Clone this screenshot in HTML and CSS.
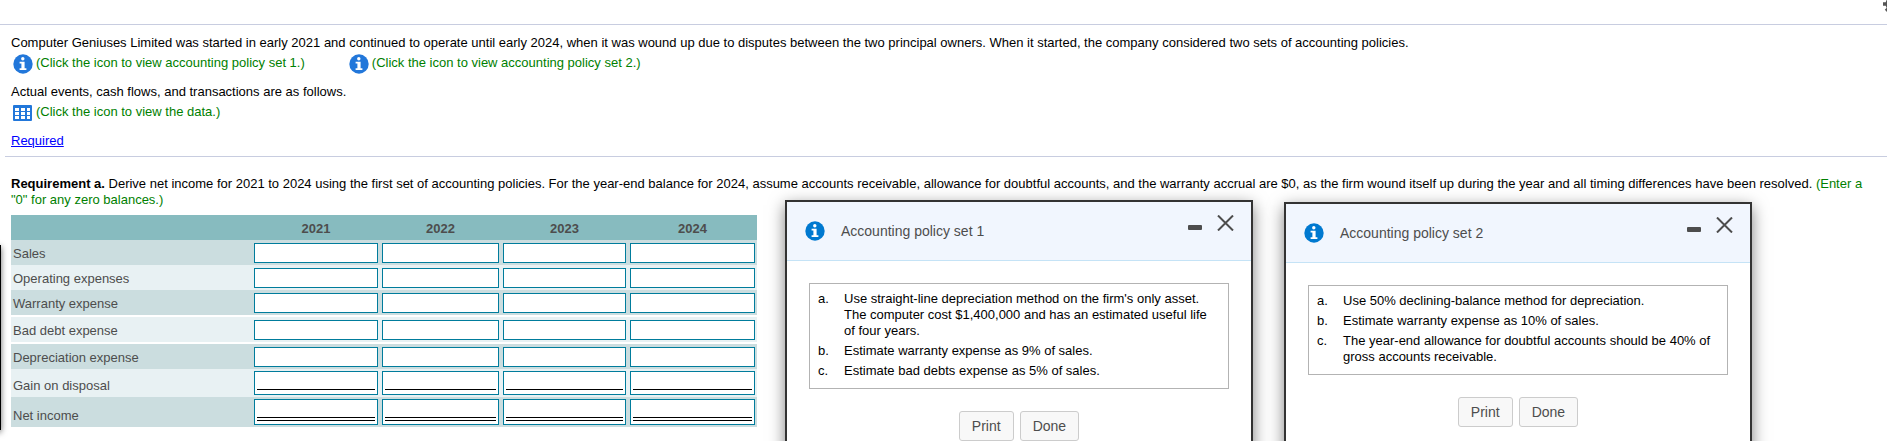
FILE: index.html
```html
<!DOCTYPE html>
<html lang="en">
<head>
<meta charset="utf-8">
<title>Accounting policy exercise</title>
<link rel="stylesheet" href="styles.css">
</head>
<body>
<svg class="defs" aria-hidden="true">
  <symbol id="info" viewBox="0 0 20 20">
    <circle cx="10" cy="10" r="9.7" fill="currentColor"/>
    <circle cx="9.8" cy="4.7" r="1.7" fill="#fff"/>
    <path d="M6.6 7.8h5v6.4h1.8v1.8H6.6v-1.8h1.8V9.6H6.6z" fill="#fff"/>
  </symbol>
</svg>
<div class="page">
  <header class="topbar">
    <button class="gear" aria-label="Settings"><svg viewBox="0 0 20 20"><circle cx="10" cy="10" r="5.5" fill="none" stroke="currentColor" stroke-width="4"/><path d="M10 0v20M0 10h20M3 3l14 14M17 3L3 17" stroke="currentColor" stroke-width="3.4"/><circle cx="10" cy="10" r="3.5" fill="#fff"/></svg></button>
  </header>
  <section class="problem">
    <p class="line">Computer Geniuses Limited was started in early 2021 and continued to operate until early 2024, when it was wound up due to disputes between the two principal owners. When it started, the company considered two sets of accounting policies.</p>
    <div class="links">
      <a class="pop" href="#set1"><svg><use href="#info"/></svg><span>(Click the icon to view accounting policy set 1.)</span></a>
      <a class="pop" href="#set2"><svg><use href="#info"/></svg><span>(Click the icon to view accounting policy set 2.)</span></a>
    </div>
    <p class="line">Actual events, cash flows, and transactions are as follows.</p>
    <div class="links">
      <a class="pop" href="#data"><svg viewBox="0 0 20 20"><rect y="2" width="19" height="16" rx="1" fill="currentColor"/><path d="M2 5h4v3H2zM8 5h4v3H8zM14 5h3v3h-3zM2 9h4v3H2zM8 9h4v3H8zM14 9h3v3h-3zM2 13h4v3H2zM8 13h4v3H8zM14 13h3v3h-3z" fill="#fff"/></svg><span>(Click the icon to view the data.)</span></a>
    </div>
    <p class="line"><a href="#required">Required</a></p>
  </section>
  <section class="requirement">
    <p class="line"><b>Requirement a.</b> Derive net income for 2021 to 2024 using the first set of accounting policies. For the year-end balance for 2024, assume accounts receivable, allowance for doubtful accounts, and the warranty accrual are $0, as the firm wound itself up during the year and all timing differences have been resolved. <span class="hint">(Enter a "0" for any zero balances.)</span></p>
    <table class="sheet">
      <colgroup><col class="c0"><col class="c1"><col class="c2"><col class="c3"><col class="c4"></colgroup>
      <thead><tr><td></td><th scope="col">2021</th><th scope="col">2022</th><th scope="col">2023</th><th scope="col">2024</th></tr></thead>
      <tbody>
        <tr><th scope="row">Sales</th><td><div class="box"><input aria-label="Sales 2021"></div></td><td><div class="box"><input aria-label="Sales 2022"></div></td><td><div class="box"><input aria-label="Sales 2023"></div></td><td><div class="box"><input aria-label="Sales 2024"></div></td></tr>
        <tr><th scope="row">Operating expenses</th><td><div class="box"><input aria-label="Operating expenses 2021"></div></td><td><div class="box"><input aria-label="Operating expenses 2022"></div></td><td><div class="box"><input aria-label="Operating expenses 2023"></div></td><td><div class="box"><input aria-label="Operating expenses 2024"></div></td></tr>
        <tr class="gap"><th scope="row">Warranty expense</th><td><div class="box"><input aria-label="Warranty expense 2021"></div></td><td><div class="box"><input aria-label="Warranty expense 2022"></div></td><td><div class="box"><input aria-label="Warranty expense 2023"></div></td><td><div class="box"><input aria-label="Warranty expense 2024"></div></td></tr>
        <tr class="gap"><th scope="row">Bad debt expense</th><td><div class="box"><input aria-label="Bad debt expense 2021"></div></td><td><div class="box"><input aria-label="Bad debt expense 2022"></div></td><td><div class="box"><input aria-label="Bad debt expense 2023"></div></td><td><div class="box"><input aria-label="Bad debt expense 2024"></div></td></tr>
        <tr><th scope="row">Depreciation expense</th><td><div class="box"><input aria-label="Depreciation expense 2021"></div></td><td><div class="box"><input aria-label="Depreciation expense 2022"></div></td><td><div class="box"><input aria-label="Depreciation expense 2023"></div></td><td><div class="box"><input aria-label="Depreciation expense 2024"></div></td></tr>
        <tr class="subtotal"><th scope="row">Gain on disposal</th><td><div class="box"><input aria-label="Gain on disposal 2021"></div></td><td><div class="box"><input aria-label="Gain on disposal 2022"></div></td><td><div class="box"><input aria-label="Gain on disposal 2023"></div></td><td><div class="box"><input aria-label="Gain on disposal 2024"></div></td></tr>
        <tr class="subtotal total"><th scope="row">Net income</th><td><div class="box"><input aria-label="Net income 2021"><i></i></div></td><td><div class="box"><input aria-label="Net income 2022"><i></i></div></td><td><div class="box"><input aria-label="Net income 2023"><i></i></div></td><td><div class="box"><input aria-label="Net income 2024"><i></i></div></td></tr>
      </tbody>
    </table>
  </section>

  <div class="edge"></div>

  <div class="dialog first" id="set1" role="dialog" aria-labelledby="t1">
    <div class="head">
      <svg class="badge"><use href="#info"/></svg>
      <h2 id="t1">Accounting policy set 1</h2>
      <button class="min" aria-label="Minimize"><svg viewBox="0 0 14 5"><rect width="14" height="5" rx="1" fill="currentColor"/></svg></button>
      <button class="close" aria-label="Close"><svg viewBox="0 0 17 16"><path d="M1 0.5l15 15M16 0.5l-15 15" stroke="currentColor" stroke-width="2"/></svg></button>
    </div>
    <ol class="policy">
      <li>Use straight-line depreciation method on the firm's only asset. The computer cost $1,400,000 and has an estimated useful life of four years.</li>
      <li>Estimate warranty expense as 9% of sales.</li>
      <li>Estimate bad debts expense as 5% of sales.</li>
    </ol>
    <div class="actions"><button>Print</button><button>Done</button></div>
  </div>

  <div class="dialog second" id="set2" role="dialog" aria-labelledby="t2">
    <div class="head">
      <svg class="badge"><use href="#info"/></svg>
      <h2 id="t2">Accounting policy set 2</h2>
      <button class="min" aria-label="Minimize"><svg viewBox="0 0 14 5"><rect width="14" height="5" rx="1" fill="currentColor"/></svg></button>
      <button class="close" aria-label="Close"><svg viewBox="0 0 17 16"><path d="M1 0.5l15 15M16 0.5l-15 15" stroke="currentColor" stroke-width="2"/></svg></button>
    </div>
    <ol class="policy">
      <li>Use 50% declining-balance method for depreciation.</li>
      <li>Estimate warranty expense as 10% of sales.</li>
      <li>The year-end allowance for doubtful accounts should be 40% of gross accounts receivable.</li>
    </ol>
    <div class="actions"><button>Print</button><button>Done</button></div>
  </div>
</div>
</body>
</html>
```
FILE: styles.css
```css
* { box-sizing: border-box; }
body {
  margin: 0;
  background: #fff;
  color: #000;
  font: 13px/16px "Liberation Sans", Arial, sans-serif;
}
.defs { position: absolute; width: 0; height: 0; }
.page { position: relative; min-height: 100vh; overflow: hidden; }

.topbar {
  display: flex;
  justify-content: flex-end;
  height: 25px;
  border-bottom: 1px solid #c8cde0;
}
.gear {
  width: 20px;
  height: 20px;
  margin: -6px -16px 0 0;
  padding: 0;
  border: 0;
  background: none;
  color: #555;
}
.gear svg { display: block; width: 20px; height: 20px; }

.line { margin: 0; }
.problem {
  margin-left: 5px;
  padding: 10px 6px 7px;
  border-bottom: 1px solid #c8cde0;
}
.problem a { color: #00f; }
.links { display: flex; gap: 42px; height: 33px; padding-top: 3px; }
.problem .pop {
  display: flex;
  gap: 3px;
  height: 20px;
  padding-left: 2px;
  color: #008000;
  line-height: 18px;
  text-decoration: none;
}
.pop svg { width: 20px; height: 20px; color: #2277da; }

.requirement { padding: 19px 22px 0 11px; }
.hint { color: #008000; }

.sheet {
  width: 746px;
  margin-top: 7px;
  border-spacing: 0;
  table-layout: fixed;
  color: #4d4d4d;
}
.c0 { width: 241px; }
.c1 { width: 128px; }
.c2 { width: 121px; }
.c3 { width: 127px; }
.c4 { width: 129px; }
.sheet td, .sheet th { height: 25px; padding: 0 2px; vertical-align: bottom; }
.sheet th { padding-bottom: 3px; }
.sheet td { padding-bottom: 2px; }
.sheet thead { background: #87bbbf; }
.sheet tbody th { font-weight: normal; text-align: left; }
.sheet tbody tr:nth-child(odd) { background: #cbdddf; }
.sheet tbody tr:nth-child(even) { background: #e8f1f3; }
.sheet .gap > * { height: 27px; border-bottom: 2px solid #fff; }
.sheet .subtotal > * { height: 28px; }
.sheet .total > * { height: 30px; }
.box { height: 20px; padding: 0 2px; border: 1px solid #007c9c; background: #fff; }
.box input {
  display: block;
  width: 100%;
  height: 18px;
  padding: 0;
  border: 0;
  outline: 0;
  background: none;
  font: inherit;
}
.subtotal .box { height: 24px; }
.subtotal .box input { border-bottom: 1px solid #000; }
.total .box { height: 26px; }
.total i { display: block; height: 3px; border-bottom: 1px solid #000; }

.edge {
  position: absolute;
  top: 245px;
  left: -9px;
  width: 10px;
  height: 185px;
  background: #000;
  box-shadow: 0 2px 6px rgba(0, 0, 0, .6);
}

.dialog {
  position: absolute;
  width: 468px;
  padding-bottom: 24px;
  border: 2px solid #333;
  background: #fff;
  box-shadow: 0 5px 15px rgba(0, 0, 0, .5);
}
.first { top: 200px; left: 785px; }
.second { top: 202px; left: 1284px; }
.head {
  display: flex;
  align-items: center;
  height: 59px;
  padding: 0 17px 0 18px;
  border-bottom: 1px solid #c5e3f6;
  background: #f1f6fe;
  color: #4d4d4d;
}
.badge { width: 20px; height: 20px; color: #0079d0; }
.head h2 { flex: 1; margin: 0 0 0 16px; font-size: 14px; font-weight: normal; }
.head button { padding: 0; border: 0; background: none; color: #4d4d4d; }
.head button svg { display: block; }
.min { width: 14px; height: 5px; margin: 0 15px 8px 0; }
.close { width: 17px; height: 16px; margin-bottom: 16px; }
.policy {
  margin: 22px;
  padding: 7px 16px 9px 34px;
  border: 1px solid #b3b3b3;
  list-style: none;
  counter-reset: item;
}
.policy li { counter-increment: item; }
.policy li + li { margin-top: 4px; }
.policy li::before {
  content: counter(item, lower-alpha) ".";
  float: left;
  margin-left: -26px;
}
.actions { display: flex; justify-content: center; gap: 6px; }
.actions button {
  height: 30px;
  padding: 0 12px;
  border: 1px solid #ccc;
  border-radius: 3px;
  background: #f8f8f8;
  color: #4d4d4d;
  font: 14px/20px "Liberation Sans", Arial, sans-serif;
}
```
